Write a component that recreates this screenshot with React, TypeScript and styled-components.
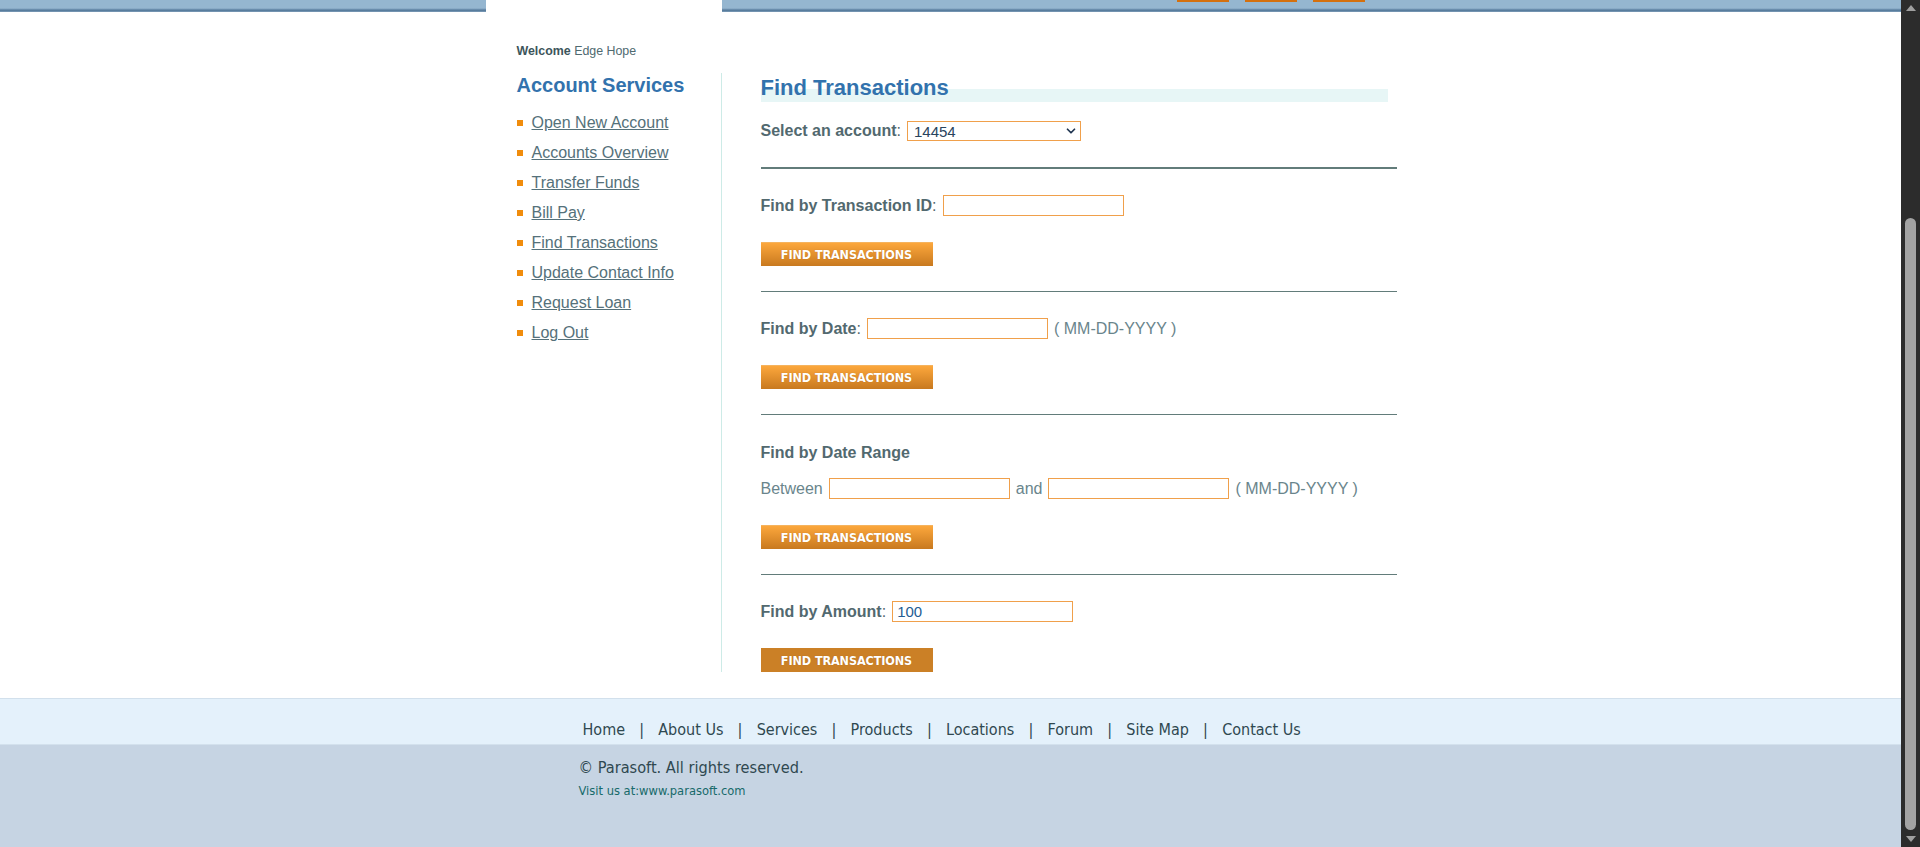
import React from 'react'
import styled, { createGlobalStyle } from 'styled-components'
import { ChevronDown } from 'lucide-react'

const colors = {
    blue: '#3272ad',
    label: '#52696f',
    text: '#6a858c',
    link: '#55717a',
    orange: '#f0a04b',
    bullet: '#f08c0c',
    rule: '#627c7a',
    footerText: '#2f4850',
}

const GlobalStyle = createGlobalStyle`
    html, body {
        margin: 0;
        padding: 0;
        height: 100%;
        overflow: hidden;
        background: #fff;
    }
    body {
        font-family: "Liberation Sans", Arial, sans-serif;
    }
    #root {
        height: 100%;
    }
`

const Window = styled.div`
    display: flex;
    height: 847px;
`

const Page = styled.div`
    flex: 1;
    min-width: 0;
    display: flex;
    flex-direction: column;
`

const TopBar = styled.div`
    flex-shrink: 0;
    height: 12px;
    background: linear-gradient(
        to bottom,
        #95b6d0 0,
        #95b6d0 8px,
        #7e9fbd 9px,
        #557a9b 10px,
        #5b7f9f 11px,
        #8aa7c1 12px
    );
`

const TopBarInner = styled.div`
    width: 930px;
    height: 100%;
    margin: 0 auto;
    display: flex;
    align-items: flex-start;
`

const Tab = styled.div`
    width: 236px;
    height: 12px;
    background: #fff;
`

const HeaderButtons = styled.div`
    display: flex;
    gap: 16px;
    margin-left: 455px;
`

const HeaderButton = styled.span`
    width: 52px;
    height: 2px;
    background: #d4700f;
`

const Content = styled.div`
    width: 930px;
    margin: 0 auto;
`

const Welcome = styled.p`
    margin: 31px 0 0;
    padding-left: 31px;
    font-size: 12.4px;
    line-height: 16px;
    color: #4f6a70;

    b {
        color: #3d555b;
    }
`

const Columns = styled.div`
    display: flex;
    margin-top: 14px;
`

const LeftPanel = styled.aside`
    width: 204px;
    padding-left: 31px;
    border-right: 1px solid #cdebe7;
`

const PanelTitle = styled.h2`
    margin: 0;
    font-size: 20px;
    line-height: 24px;
    color: ${colors.blue};
`

const NavList = styled.ul`
    list-style: none;
    margin: 11px 0 0;
    padding: 0;
`

const NavItem = styled.li`
    display: flex;
    align-items: center;
    gap: 9px;
    height: 30px;

    &::before {
        content: '';
        width: 6px;
        height: 6px;
        flex-shrink: 0;
        background: ${colors.bullet};
    }
`

const NavLink = styled.a`
    font-size: 16px;
    color: ${colors.link};
    text-decoration: underline;
    cursor: pointer;
`

const Main = styled.main`
    width: 636px;
    padding-left: 39px;
`

const Title = styled.h1`
    margin: 0;
    width: 627px;
    font-size: 22px;
    line-height: 29px;
    color: ${colors.blue};
    background: linear-gradient(to bottom, transparent 16px, #e7f6f6 16px);
`

const Row = styled.div<{ $top?: number; $h?: number }>`
    display: flex;
    align-items: center;
    gap: 6px;
    height: ${(p) => p.$h ?? 21}px;
    margin-top: ${(p) => p.$top ?? 26}px;
    font-size: 16px;
    color: ${colors.text};
`

const Label = styled.span`
    color: ${colors.label};

    b {
        font-weight: bold;
    }
`

const SubHeading = styled.div`
    margin-top: 28px;
    font-size: 16px;
    line-height: 20px;
    font-weight: bold;
    color: ${colors.label};
`

const SelectWrap = styled.div`
    position: relative;
    width: 174px;
    height: 20px;
`

const Select = styled.select`
    appearance: none;
    width: 100%;
    height: 100%;
    margin: 0;
    padding: 0 0 0 6px;
    border: 1px solid ${colors.orange};
    border-radius: 0;
    background: #fff;
    font-family: "Liberation Sans", Arial, sans-serif;
    font-size: 15px;
    color: #28445e;
    outline: none;
`

const SelectIcon = styled(ChevronDown)`
    position: absolute;
    right: 3px;
    top: 3px;
    pointer-events: none;
    color: #1f3450;
`

const Input = styled.input`
    box-sizing: border-box;
    width: 181px;
    height: 21px;
    margin: 0;
    padding: 0 4px;
    border: 1px solid ${colors.orange};
    border-radius: 0;
    font-family: "Liberation Sans", Arial, sans-serif;
    font-size: 15px;
    color: #245c92;
    outline: none;
`

const Rule = styled.hr<{ $thick?: boolean; $top?: number }>`
    height: ${(p) => (p.$thick ? 2 : 1)}px;
    margin: ${(p) => p.$top ?? 25}px 0 0;
    border: 0;
    background: ${colors.rule};
`

const Button = styled.button<{ $pressed?: boolean }>`
    display: block;
    width: 172px;
    height: 24px;
    margin-top: 26px;
    padding: 0;
    border: 0;
    border-top: 1px solid ${(p) => (p.$pressed ? '#cb8026' : '#f5b35e')};
    background: ${(p) => (p.$pressed ? '#cb8026' : 'linear-gradient(to bottom, #fca73c, #c8791f)')};
    color: #fff;
    font-family: "Liberation Sans Narrow", "DejaVu Sans Condensed", "Liberation Sans", Arial, sans-serif;
    font-stretch: condensed;
    font-size: 12.5px;
    font-weight: bold;
    letter-spacing: -0.1px;
    text-shadow: 0 0 1px rgba(120, 60, 0, 0.35);
    cursor: pointer;
`

const Footer = styled.footer`
    flex: 1;
    display: flex;
    flex-direction: column;
    margin-top: 26px;
    border-top: 1px solid #d2e0ec;
    font-family: "DejaVu Sans Condensed", "DejaVu Sans", "Liberation Sans", sans-serif;
    font-stretch: condensed;
`

const FooterNav = styled.div`
    height: 46px;
    padding-top: 21px;
    box-sizing: border-box;
    background: #e4f1fb;
    border-bottom: 1px solid #d3e1ed;
`

const FooterInner = styled.div`
    width: 744px;
    margin: 0 auto;
`

const FooterLinks = styled.ul`
    display: flex;
    margin: 0;
    padding: 0 0 0 4px;
    list-style: none;
    font-size: 16px;
    line-height: 20px;
    color: ${colors.footerText};

    li + li::before {
        content: '|';
        margin: 0 14.2px;
    }
`

const FooterBottom = styled.div`
    flex: 1;
    padding-top: 13px;
    background: #c6d4e3;
`

const Copyright = styled.p`
    margin: 0;
    font-size: 16.2px;
    line-height: 20px;
    color: ${colors.footerText};
`

const Visit = styled.p`
    margin: 5px 0 0;
    font-size: 12.8px;
    line-height: 16px;
    color: #176a6a;
`

const Scrollbar = styled.div`
    width: 19px;
    flex-shrink: 0;
    display: flex;
    flex-direction: column;
    align-items: center;
    background: #2c2c2c;
`

const Arrow = styled.span<{ $down?: boolean }>`
    width: 0;
    height: 0;
    margin: ${(p) => (p.$down ? 'auto 0 5px' : '5px 0 0')};
    border-left: 5px solid transparent;
    border-right: 5px solid transparent;
    ${(p) => (p.$down ? 'border-top: 6px solid #9f9f9f;' : 'border-bottom: 6px solid #9f9f9f;')}
`

const Thumb = styled.div`
    width: 11px;
    height: 612px;
    margin-top: 207px;
    border-radius: 6px;
    background: #a3a3a3;
`

const navItems = [
    'Open New Account',
    'Accounts Overview',
    'Transfer Funds',
    'Bill Pay',
    'Find Transactions',
    'Update Contact Info',
    'Request Loan',
    'Log Out',
]

const footerItems = ['Home', 'About Us', 'Services', 'Products', 'Locations', 'Forum', 'Site Map', 'Contact Us']

const FindButton = ({ pressed }: { pressed?: boolean }) => <Button $pressed={pressed}>FIND TRANSACTIONS</Button>

const App = () => {
    return (
        <Window>
            <GlobalStyle />
            <Page>
                <TopBar>
                    <TopBarInner>
                        <Tab />
                        <HeaderButtons>
                            <HeaderButton />
                            <HeaderButton />
                            <HeaderButton />
                        </HeaderButtons>
                    </TopBarInner>
                </TopBar>

                <Content>
                    <Welcome>
                        <b>Welcome</b> Edge Hope
                    </Welcome>
                    <Columns>
                        <LeftPanel>
                            <PanelTitle>Account Services</PanelTitle>
                            <NavList>
                                {navItems.map((item) => (
                                    <NavItem key={item}>
                                        <NavLink>{item}</NavLink>
                                    </NavItem>
                                ))}
                            </NavList>
                        </LeftPanel>

                        <Main>
                            <Title>Find Transactions</Title>
                            <Row $top={19} $h={20}>
                                <Label>
                                    <b>Select an account</b>:
                                </Label>
                                <SelectWrap>
                                    <Select defaultValue='14454'>
                                        <option value='14454'>14454</option>
                                    </Select>
                                    <SelectIcon size={14} strokeWidth={3} />
                                </SelectWrap>
                            </Row>
                            <Rule $thick $top={26} />

                            <Row>
                                <Label>
                                    <b>Find by Transaction ID</b>:
                                </Label>
                                <Input />
                            </Row>
                            <FindButton />
                            <Rule />

                            <Row>
                                <Label>
                                    <b>Find by Date</b>:
                                </Label>
                                <Input />
                                <span>( MM-DD-YYYY )</span>
                            </Row>
                            <FindButton />
                            <Rule />

                            <SubHeading>Find by Date Range</SubHeading>
                            <Row $top={15}>
                                <span>Between</span>
                                <Input />
                                <span>and</span>
                                <Input />
                                <span>( MM-DD-YYYY )</span>
                            </Row>
                            <FindButton />
                            <Rule />

                            <Row>
                                <Label>
                                    <b>Find by Amount</b>:
                                </Label>
                                <Input defaultValue='100' />
                            </Row>
                            <FindButton pressed />
                        </Main>
                    </Columns>
                </Content>

                <Footer>
                    <FooterNav>
                        <FooterInner>
                            <FooterLinks>
                                {footerItems.map((item) => (
                                    <li key={item}>{item}</li>
                                ))}
                            </FooterLinks>
                        </FooterInner>
                    </FooterNav>
                    <FooterBottom>
                        <FooterInner>
                            <Copyright>© Parasoft. All rights reserved.</Copyright>
                            <Visit>Visit us at:www.parasoft.com</Visit>
                        </FooterInner>
                    </FooterBottom>
                </Footer>
            </Page>

            <Scrollbar>
                <Arrow />
                <Thumb />
                <Arrow $down />
            </Scrollbar>
        </Window>
    )
}

export default App
